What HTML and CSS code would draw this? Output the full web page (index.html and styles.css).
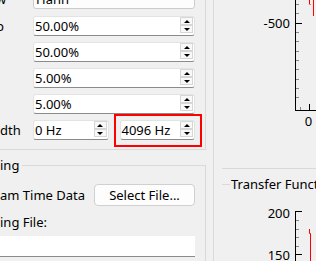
FILE: index.html
```html
<!DOCTYPE html>
<html lang="en">
<head>
    <meta charset="UTF-8">
    <title>Spectrum</title>
    <link rel="stylesheet" href="styles.css">
</head>
<body>
    <div class="window">
        <div class="side">
            <div class="group settings">
                <div class="row first">
                    <span class="label cut">w</span>
                    <div class="combo">
                        <span class="value">Hann</span>
                        <svg class="chevron" width="7" height="4" viewBox="0 0 7 4"><path d="M0.5 0.5 L3.5 3.5 L6.5 0.5" fill="none" stroke="#8a8a8a"/></svg>
                    </div>
                </div>
                <div class="row">
                    <span class="label cut">p</span>
                    <div class="spin"><span class="value">50.00%</span><div class="arrows"><span class="up"></span><span class="down"></span></div></div>
                </div>
                <div class="row">
                    <span class="label"></span>
                    <div class="spin"><span class="value">50.00%</span><div class="arrows"><span class="up"></span><span class="down"></span></div></div>
                </div>
                <div class="row">
                    <span class="label"></span>
                    <div class="spin"><span class="value">5.00%</span><div class="arrows"><span class="up"></span><span class="down"></span></div></div>
                </div>
                <div class="row">
                    <span class="label"></span>
                    <div class="spin"><span class="value">5.00%</span><div class="arrows"><span class="up"></span><span class="down"></span></div></div>
                </div>
                <div class="row pair">
                    <span class="label">dth</span>
                    <div class="spin"><span class="value">0 Hz</span><div class="arrows"><span class="up"></span><span class="down"></span></div></div>
                    <div class="spin marked"><span class="value">4096 Hz</span><div class="arrows"><span class="up"></span><span class="down"></span></div></div>
                </div>
            </div>

            <div class="group source">
                <div class="group-title">ing</div>
                <div class="file-row">
                    <span>am Time Data</span>
                    <button>Select File...</button>
                </div>
                <div class="caption">ing File:</div>
                <div class="path"></div>
            </div>
        </div>

        <div class="plots">
            <div class="group plot-top">
                <svg width="117" height="168" viewBox="223 0 117 168">
                    <g stroke="#888" stroke-width="1">
                        <line x1="296" y1="4.5" x2="300" y2="4.5"/>
                        <line x1="296" y1="13.5" x2="300" y2="13.5"/>
                        <line x1="296" y1="32.5" x2="300" y2="32.5"/>
                        <line x1="296" y1="41.5" x2="300" y2="41.5"/>
                        <line x1="296" y1="51.5" x2="300" y2="51.5"/>
                        <line x1="296" y1="60.5" x2="300" y2="60.5"/>
                        <line x1="296" y1="69.5" x2="300" y2="69.5"/>
                        <line x1="296" y1="79.5" x2="300" y2="79.5"/>
                        <line x1="296" y1="88.5" x2="300" y2="88.5"/>
                        <line x1="296" y1="97.5" x2="300" y2="97.5"/>
                        <line x1="301.5" y1="107" x2="301.5" y2="110"/>
                    </g>
                    <g stroke="#000" stroke-width="1">
                        <line x1="296.5" y1="0" x2="296.5" y2="111"/>
                        <line x1="296" y1="110.5" x2="340" y2="110.5"/>
                        <line x1="296" y1="23.5" x2="303" y2="23.5"/>
                        <line x1="310.5" y1="104" x2="310.5" y2="110"/>
                    </g>
                    <polyline points="310.5,0 310.5,4 311.5,5" fill="none" stroke="#f00"/>
                    <line x1="314.5" y1="0" x2="314.5" y2="16" stroke="#f00"/>
                    <text class="tick-label" x="291" y="28" text-anchor="end">-500</text>
                    <text class="tick-label" x="309.5" y="126" text-anchor="middle">0</text>
                </svg>
            </div>

            <div class="group plot-bottom">
                <div class="group-title">Transfer Function</div>
                <svg width="117" height="70" viewBox="223 192 117 70">
                    <g stroke="#888" stroke-width="1">
                        <line x1="296" y1="220.5" x2="300" y2="220.5"/>
                        <line x1="296" y1="229.5" x2="300" y2="229.5"/>
                        <line x1="296" y1="237.5" x2="300" y2="237.5"/>
                        <line x1="296" y1="246.5" x2="300" y2="246.5"/>
                    </g>
                    <g stroke="#000" stroke-width="1">
                        <line x1="296.5" y1="211" x2="296.5" y2="262"/>
                        <line x1="296" y1="211.5" x2="303" y2="211.5"/>
                        <line x1="296" y1="254.5" x2="303" y2="254.5"/>
                    </g>
                    <polyline points="310.5,229 310.5,233.5 311.5,233.5 311.5,262" fill="none" stroke="#f00"/>
                    <text class="tick-label" x="291" y="217.5" text-anchor="end">200</text>
                    <text class="tick-label" x="291" y="259.5" text-anchor="end">150</text>
                </svg>
            </div>
        </div>
    </div>
</body>
</html>
```

FILE: styles.css
```css
html, body {
    margin: 0;
    overflow: hidden;
}
body {
    font-family: "Noto Sans", "Open Sans", sans-serif;
    font-size: 13px;
    color: #000;
    background-color: #f0f0f0;
}
.window {
    display: flex;
    width: 340px;
    height: 261px;
    overflow: hidden;
}

/* left column */
.side {
    width: 206px;
    flex: none;
    display: flex;
    flex-direction: column;
}
.group {
    border: 1px solid #d9d9d9;
    border-left: none;
}
.group-title {
    display: table;
    margin-top: -9px;
    padding-right: 3px;
    line-height: 16px;
    background-color: #f0f0f0;
}
.settings {
    margin-top: -11px;
    border-top: none;
    padding: 0 10px 9px 0;
    display: flex;
    flex-direction: column;
    gap: 6px;
}
.row {
    display: flex;
    align-items: center;
    height: 20px;
}
.row.first {
    margin-bottom: 1px;
}
.row.pair {
    gap: 11px;
}
.label {
    width: 33px;
    flex: none;
    line-height: 16px;
    white-space: nowrap;
    overflow: hidden;
}
.pair .label {
    margin-right: -11px;
}
.label.cut {
    text-indent: -4px;
}
.combo {
    flex: 1;
    height: 20px;
    box-sizing: border-box;
    display: flex;
    align-items: center;
    padding: 0 6px 0 2px;
    background-color: #fdfdfd;
    border: 1px solid #cccccc;
    border-radius: 3px;
}
.combo .value {
    flex: 1;
}
.chevron {
    margin-top: -8px;
}
.spin {
    flex: 1;
    min-width: 0;
    height: 20px;
    box-sizing: border-box;
    display: flex;
    padding: 0 1px 0 1px;
    background-color: white;
    border: 1px solid #e3e3e3;
    border-bottom-color: #8b8b8b;
    border-radius: 3px;
}
.spin .value {
    flex: 1;
    line-height: 18px;
    white-space: nowrap;
}
.arrows {
    width: 13px;
    display: flex;
    flex-direction: column;
}
.arrows span {
    height: 8px;
    box-sizing: border-box;
    display: flex;
    align-items: center;
    justify-content: center;
    background-color: #f8f8f8;
    border: 1px solid #d6d6d6;
}
.arrows .up::before {
    content: "";
    border-left: 3px solid transparent;
    border-right: 3px solid transparent;
    border-bottom: 3px solid #000;
}
.arrows .down::before {
    content: "";
    border-left: 3px solid transparent;
    border-right: 3px solid transparent;
    border-top: 3px solid #000;
}
.marked {
    position: relative;
}
.marked::after {
    content: "";
    position: absolute;
    left: -7px;
    right: -8px;
    top: -7px;
    bottom: -8px;
    border: 2px solid #f00;
}

.source {
    flex: 1;
    margin-top: 15px;
    padding-right: 10px;
    border-bottom: none;
}
.file-row {
    margin-top: 11px;
    display: flex;
    align-items: center;
    justify-content: space-between;
}
button {
    width: 101px;
    height: 22px;
    padding: 0;
    font-family: inherit;
    font-size: 13px;
    color: #000;
    background-color: #fdfdfd;
    border: 1px solid #d0d0d0;
    border-radius: 4px;
}
.caption {
    margin-top: 8px;
    line-height: 16px;
}
.path {
    margin: 6px 0 0 -20px;
    height: 21px;
    box-sizing: border-box;
    background-color: white;
    border-bottom: 1px solid #8b8b8b;
}

/* right column */
.plots {
    flex: 1;
    margin-left: 7px;
    padding-left: 8px;
    border-left: 1px solid #dadada;
}
.plot-top {
    height: 168px;
    border-top: none;
}
.plot-top svg,
.plot-bottom svg {
    display: block;
}
.plot-bottom {
    margin-top: 15px;
    border-bottom: none;
}
.plot-bottom .group-title {
    margin-left: 8px;
    padding: 0 1px;
}
.tick-label {
    font-family: "Noto Sans", "Open Sans", sans-serif;
    font-size: 13px;
    fill: #000;
}
```
